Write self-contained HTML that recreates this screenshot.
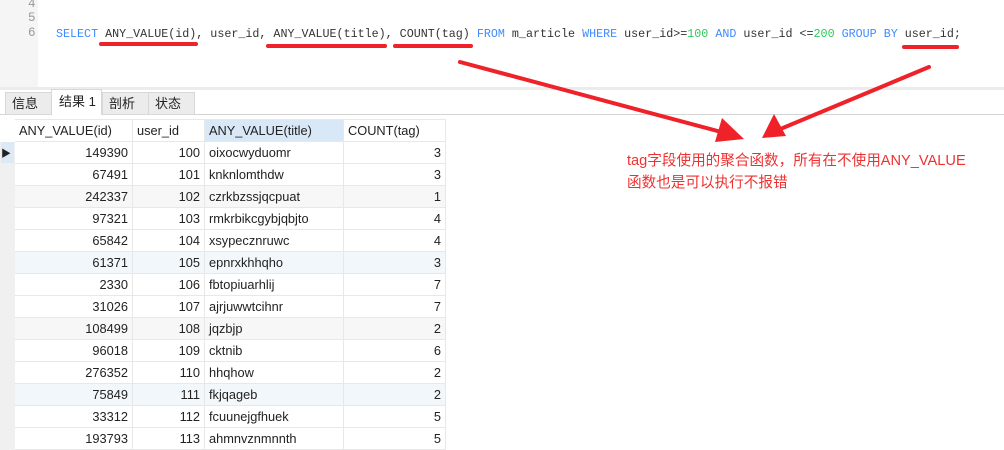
<!DOCTYPE html>
<html><head><meta charset="utf-8"><style>
*{margin:0;padding:0;box-sizing:border-box}
body{width:1004px;height:437px;overflow:hidden;background:#fff;position:relative;font-family:"Microsoft YaHei","Liberation Sans","Noto Sans CJK SC",sans-serif}
.gut{position:absolute;left:0;top:0;width:38px;height:87px;background:#f5f5f5}
.ln{position:absolute;left:28px;font:12.5px/14px "Liberation Mono",monospace;color:#999}
.sql{position:absolute;left:56px;top:26px;font:11.7px/14px "Liberation Mono",monospace;color:#333;white-space:pre}
.k{color:#3d8bff}.n{color:#2fc95b}
.band{position:absolute;left:0;top:87px;width:1004px;height:3px;background:#ececec}
.tab{position:absolute;top:92px;height:23px;font-size:13px;line-height:22px;padding-left:6px;background:#ececec;border:1px solid #d8d8d8;color:#222}
.line{position:absolute;left:0;top:114px;width:1004px;height:1px;background:#d4d4d4}
table{position:absolute;left:0;top:119px;border-collapse:collapse;font-size:12.8px;font-family:"Microsoft YaHei","Liberation Sans","Noto Sans CJK SC",sans-serif;color:#222}
td{height:22px;border:1px solid #e8e8e8;padding:0 4px;white-space:nowrap}
td.g{width:14px;background:#f0f0f0;border-color:#f0f0f0;padding:0}
td.r{text-align:right}
tr.h td{background:#fff}
tr.s td{background:#f7f7f7}tr.b td{background:#f2f7fc}
tr td.g{background:#f0f0f0!important}
.note{position:absolute;left:627px;top:150px;font-size:14.6px;line-height:22px;color:#f03030}
</style></head><body>
<div class="gut"></div>
<div class="ln" style="top:-3px">4</div><div class="ln" style="top:11px">5</div><div class="ln" style="top:26px">6</div>
<div class="sql" style="top:27px"><span class="k">SELECT</span> ANY_VALUE(id), user_id, ANY_VALUE(title), COUNT(tag) <span class="k">FROM</span> m_article <span class="k">WHERE</span> user_id&gt;=<span class="n">100</span> <span class="k">AND</span> user_id &lt;=<span class="n">200</span> <span class="k">GROUP BY</span> user_id;</div>
<div class="band"></div>
<div class="line"></div>
<div class="tab" style="left:5px;width:47px">信息</div>
<div class="tab" style="left:51px;width:51px;top:89px;height:26px;background:#fff;border-bottom:none;padding-left:7px;line-height:24px">结果 1</div>
<div class="tab" style="left:102px;width:47px">剖析</div>
<div class="tab" style="left:148px;width:47px">状态</div>
<table>
<tr class="h"><td class="g" style="background:#fff!important;border-color:#fff"></td><td style="width:118px">ANY_VALUE(id)</td><td style="width:72px">user_id</td><td style="width:139px;background:#d9e8f6">ANY_VALUE(title)</td><td style="width:102px">COUNT(tag)</td></tr>
<tr><td class="g" style="background:#dce9f6!important;font-size:10px">▶</td><td class="r">149390</td><td class="r">100</td><td>oixocwyduomr</td><td class="r">3</td></tr>
<tr><td class="g"></td><td class="r">67491</td><td class="r">101</td><td>knknlomthdw</td><td class="r">3</td></tr>
<tr class="s"><td class="g"></td><td class="r">242337</td><td class="r">102</td><td>czrkbzssjqcpuat</td><td class="r">1</td></tr>
<tr><td class="g"></td><td class="r">97321</td><td class="r">103</td><td>rmkrbikcgybjqbjto</td><td class="r">4</td></tr>
<tr><td class="g"></td><td class="r">65842</td><td class="r">104</td><td>xsypecznruwc</td><td class="r">4</td></tr>
<tr class="b"><td class="g"></td><td class="r">61371</td><td class="r">105</td><td>epnrxkhhqho</td><td class="r">3</td></tr>
<tr><td class="g"></td><td class="r">2330</td><td class="r">106</td><td>fbtopiuarhlij</td><td class="r">7</td></tr>
<tr><td class="g"></td><td class="r">31026</td><td class="r">107</td><td>ajrjuwwtcihnr</td><td class="r">7</td></tr>
<tr class="s"><td class="g"></td><td class="r">108499</td><td class="r">108</td><td>jqzbjp</td><td class="r">2</td></tr>
<tr><td class="g"></td><td class="r">96018</td><td class="r">109</td><td>cktnib</td><td class="r">6</td></tr>
<tr><td class="g"></td><td class="r">276352</td><td class="r">110</td><td>hhqhow</td><td class="r">2</td></tr>
<tr class="b"><td class="g"></td><td class="r">75849</td><td class="r">111</td><td>fkjqageb</td><td class="r">2</td></tr>
<tr><td class="g"></td><td class="r">33312</td><td class="r">112</td><td>fcuunejgfhuek</td><td class="r">5</td></tr>
<tr><td class="g"></td><td class="r">193793</td><td class="r">113</td><td>ahmnvznmnnth</td><td class="r">5</td></tr>
</table>
<div class="note">tag字段使用的聚合函数，所有在不使用ANY_VALUE<br>函数也是可以执行不报错</div>
<svg width="1004" height="437" style="position:absolute;left:0;top:0" fill="none" stroke="#ee2228" stroke-linecap="round">
<g stroke-width="4"><path d="M101 44H196"/><path d="M268 46H385"/><path d="M395 46H471"/><path d="M904 47H957"/></g>
<g stroke-width="4"><path d="M460 62L725 133"/><path d="M929 67L778 130"/></g>
<g fill="#ee2228" stroke="none"><path d="M744 139L722 118L715 142Z"/><path d="M762 138L774 114L786 136Z"/></g>
</svg>
</body></html>
